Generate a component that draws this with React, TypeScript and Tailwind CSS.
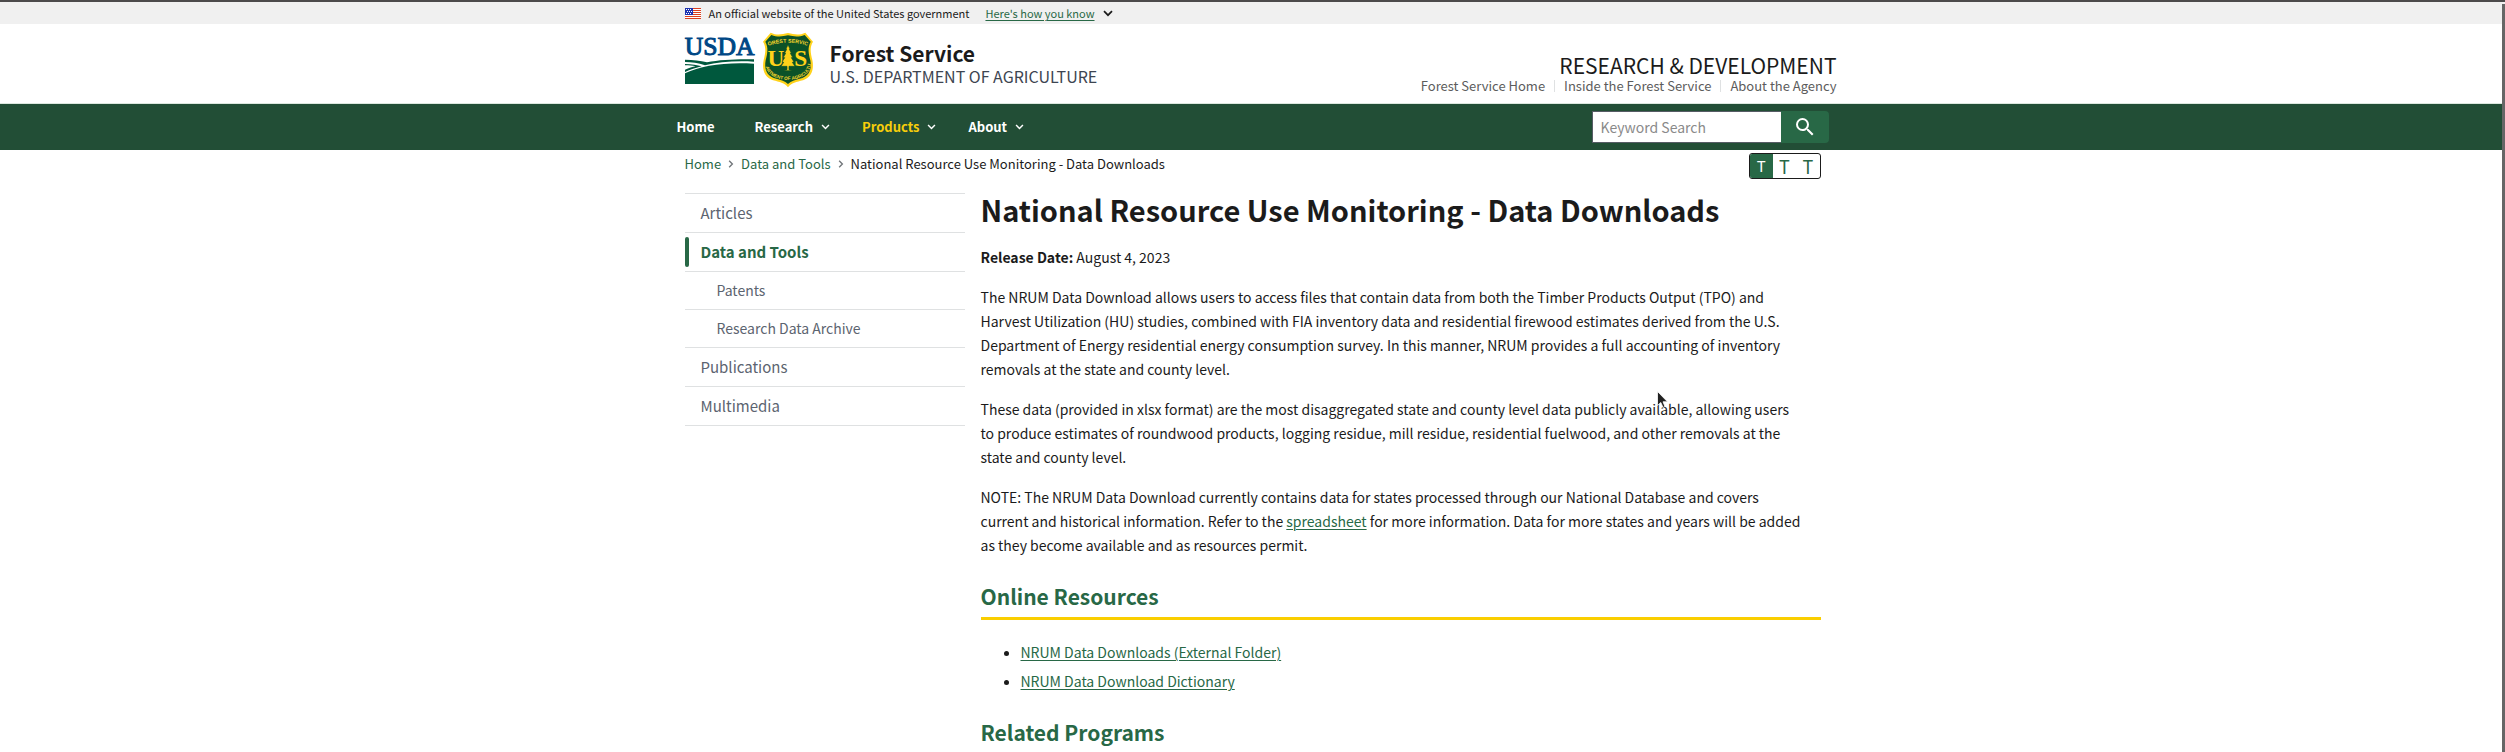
import React from "react";

const link = "text-[#286846] underline decoration-1 underline-offset-2";

function Chevron({ className }: { className: string }) {
  return (
    <svg viewBox="0 0 10 7" className={className} fill="none" stroke="currentColor" strokeWidth="1.7" aria-hidden="true">
      <path d="M1 1.2 L5 5.2 L9 1.2" />
    </svg>
  );
}

function Flag() {
  return (
    <svg viewBox="0 0 16 11" className="h-[11px] w-4" role="img" aria-label="U.S. flag" shapeRendering="crispEdges">
      <rect width="16" height="11" fill="#fff" />
      {[0, 2, 4, 6, 8, 10].map((y) => (
        <rect key={y} y={y} width="16" height="1" fill="#db3e1f" />
      ))}
      <rect width="8" height="7" fill="#1e33b1" />
      {[1, 3, 5].map((y) =>
        [1, 3, 5].map((x) => <rect key={`${x}-${y}`} x={x + (y === 3 ? 1 : 0)} y={y} width="1" height="1" fill="#fff" />)
      )}
    </svg>
  );
}

function UsdaLogo() {
  return (
    <svg viewBox="0 0 207 147" className="h-[49px] w-[69px] overflow-visible" role="img" aria-label="USDA">
      <text x="-1" y="57" fontFamily="Liberation Serif, serif" fontSize="77" fill="#004785" stroke="#004785" strokeWidth="3">
        USDA
      </text>
      <path d="M0 71 C25 71 45 74 66 79 C105 71 155 69 207 70 V77 C150 74 100 78 60 88 C40 81 20 78 0 78 Z" fill="#00583d" />
      <path d="M0 84 C20 84 38 87 50 91 C33 96 15 101 0 108 V101 C12 96 22 93 32 91 C22 89 12 88 0 88 Z" fill="#00583d" />
      <path d="M0 144 V112 C50 88 120 78 207 83 V144 Z" fill="#00583d" />
    </svg>
  );
}

function ShieldLogo() {
  return (
    <svg viewBox="0 0 156 168" className="h-14 w-[52px] overflow-visible" role="img" aria-label="Forest Service shield">
      <path
        d="M26 2 C43 10 58 8 78 3 C98 8 113 10 130 2 L153 29 C142 47 146 63 151 84 C157 113 148 137 123 145 C104 150 88 153 78 166 C68 153 52 150 33 145 C8 137 -1 113 5 84 C10 63 14 47 3 29 Z"
        fill="#ffd21a"
      />
      <path
        d="M28 9 C46 16 61 14 78 10 C95 14 110 16 128 9 L146 29 C136 47 140 65 145 85 C150 110 142 131 121 138 C102 143 87 147 78 156 C69 147 54 143 35 138 C14 131 6 110 11 85 C16 65 20 47 10 29 Z"
        fill="#0b5228"
      />
      <defs>
        <path id="shield-top" d="M18 42 Q78 22 138 42" />
        <path id="shield-bottom" d="M10 100 C16 158 140 158 146 100" />
      </defs>
      <g fontFamily="Liberation Sans Narrow, Liberation Sans, sans-serif" fontWeight="700" fill="#f5d32a" textAnchor="middle">
        <text fontSize="16">
          <textPath href="#shield-top" startOffset="50%">FOREST SERVICE</textPath>
        </text>
        <text fontSize="14">
          <textPath href="#shield-bottom" startOffset="50%">DEPARTMENT OF AGRICULTURE</textPath>
        </text>
      </g>
      <g fontFamily="Liberation Serif, serif" fontWeight="700" fontSize="70" fill="#ffd21a" textAnchor="middle">
        <text x="42" y="102">U</text>
        <text x="116" y="102">S</text>
      </g>
      <path
        d="M78 38 L84 51 L82 52 L88 63 L85 64 L92 76 L88 77 L96 90 L91 91 L99 103 L81 103 V113 L92 116 H64 L75 113 V103 L57 103 L65 91 L60 90 L68 77 L64 76 L71 64 L68 63 L74 52 L72 51 Z"
        fill="#ffd21a"
        stroke="#0b5228"
        strokeWidth="2"
      />
    </svg>
  );
}

const menu = [
  { label: "Home" },
  { label: "Research", more: true },
  { label: "Products", more: true, current: true },
  { label: "About", more: true },
];

const side = [
  { label: "Articles" },
  { label: "Data and Tools", current: true },
  { label: "Patents", sub: true },
  { label: "Research Data Archive", sub: true },
  { label: "Publications" },
  { label: "Multimedia" },
];

const container = "mx-auto w-full max-w-[1200px] px-8";
const sectionTitle = "mt-[22px] border-b-3 border-[#face00] pb-1 text-[21px] leading-[34px] font-bold text-[#286846]";
const agencyLink = "flex items-center before:mx-[9px] before:h-3 before:w-px before:bg-[#dfe1e2]";

export default function App() {
  return (
    <div className="relative flex h-screen flex-col overflow-hidden bg-white font-['Noto_Sans_CJK_SC','Noto_Sans',sans-serif] text-[14px] leading-6 text-[#1b1b1b]">
      <div className="border-t-2 border-[#4c4a4b] bg-[#f0f0f0]">
        <div className={`${container} flex h-[22px] items-center text-[11px] leading-[22px]`}>
          <Flag />
          <span className="ml-2">An official website of the United States government</span>
          <button className={`${link} ml-4`}>Here&apos;s how you know</button>
          <Chevron className="ml-2 h-[7px] w-2.5" />
        </div>
      </div>

      <header>
        <div className="border-b border-[#dce8df]">
          <div className={`${container} flex h-[79px] items-start`}>
            <a href="#usda" className="pt-3">
              <UsdaLogo />
            </a>
            <a href="#fs" className="ml-2 pt-2">
              <ShieldLogo />
            </a>
            <div className="ml-4 pt-[17px]">
              <div className="text-[21px] leading-6 font-bold">Forest Service</div>
              <div className="text-[16px] leading-[22px] text-[#3d4551]">U.S. DEPARTMENT OF AGRICULTURE</div>
            </div>
            <div className="-mr-4 ml-auto flex flex-col items-end pt-[29px]">
              <div className="text-[21px] leading-6">RESEARCH &amp; DEVELOPMENT</div>
              <div className="flex items-center text-[13px] leading-[18px] text-[#5c5c5c]">
                <a href="#home">Forest Service Home</a>
                <a href="#inside" className={agencyLink}>
                  Inside the Forest Service
                </a>
                <a href="#about" className={agencyLink}>
                  About the Agency
                </a>
              </div>
            </div>
          </div>
        </div>
        <nav className="bg-[#224e36]">
          <div className={`${container} flex h-[46px] items-center`}>
            <ul className="-ml-2 flex items-center gap-8 text-[13px] font-bold">
              {menu.map((m) => (
                <li key={m.label}>
                  <button className={`flex items-center gap-2 ${m.current ? "text-[#f7cd0a]" : "text-white"} ${m.more ? "" : "pr-2"}`}>
                    {m.label}
                    {m.more && <Chevron className="h-[6px] w-[9px] text-white" />}
                  </button>
                </li>
              ))}
            </ul>
            <form className="-mr-2 ml-auto flex" role="search">
              <input
                type="search"
                aria-label="Keyword Search"
                placeholder="Keyword Search"
                className="h-8 w-[189px] border border-r-0 border-[#565c65] bg-white px-2 text-[14px] placeholder:text-[#8a8a8a]"
              />
              <button aria-label="Search" className="flex h-8 w-12 items-center justify-center rounded-r bg-[#286846] text-white">
                <svg viewBox="0 0 24 24" className="h-6 w-6" fill="currentColor" aria-hidden="true">
                  <path d="M15.5 14h-.79l-.28-.27A6.471 6.471 0 0 0 16 9.5 6.5 6.5 0 1 0 9.5 16c1.61 0 3.09-.59 4.23-1.57l.27.28v.79l5 4.99L20.49 19l-4.99-5zm-6 0C7.01 14 5 11.99 5 9.5S7.01 5 9.5 5 14 7.01 14 9.5 11.99 14 9.5 14z" />
                </svg>
              </button>
            </form>
          </div>
        </nav>
      </header>

      <div className={`${container} flex items-start justify-between`}>
        <nav aria-label="Breadcrumb" className="pt-0.5">
          <ol className="flex items-center text-[13px] leading-6">
            <li>
              <a href="#home" className="text-[#286846]">Home</a>
            </li>
            <li className="flex items-center">
              <Chevron className="mx-1.5 h-[6px] w-2 -rotate-90 text-[#71767a]" />
              <a href="#data" className="text-[#286846]">Data and Tools</a>
            </li>
            <li className="flex items-center">
              <Chevron className="mx-1.5 h-[6px] w-2 -rotate-90 text-[#71767a]" />
              National Resource Use Monitoring - Data Downloads
            </li>
          </ol>
        </nav>
        <div className="mt-[3px] flex h-[26px] w-[72px] overflow-hidden rounded-[3px] border border-[#1b1b1b] leading-6">
          <button aria-label="Small text" className="flex-1 bg-[#286846] text-[15px] text-white">T</button>
          <button aria-label="Medium text" className="flex-1 text-[18px] text-[#286846]">T</button>
          <button aria-label="Large text" className="flex-1 text-[18px] text-[#286846]">T</button>
        </div>
      </div>

      <div className={`${container} flex items-start gap-4 pt-3.5`}>
        <nav aria-label="Section" className="w-[280px] shrink-0">
          <ul className="divide-y divide-[#dfe1e2] border-y border-[#dfe1e2] text-[#5c6470]">
            {side.map((s) => (
              <li key={s.label} className="relative">
                <a
                  href="#section"
                  className={
                    s.sub
                      ? "block py-[7px] pl-8 text-[14px] leading-[23px]"
                      : s.current
                        ? "block py-[7px] pl-4 text-[15px] leading-6 font-bold text-[#286846]"
                        : "block py-[7px] pl-4 text-[15px] leading-6"
                  }
                >
                  {s.label}
                </a>
                {s.current && <span className="absolute inset-y-1 left-0 w-1 rounded-full bg-[#286846]" />}
              </li>
            ))}
          </ul>
        </nav>

        <main className="min-w-0 flex-1">
          <h1 className="text-[29px] leading-8 font-bold">National Resource Use Monitoring - Data Downloads</h1>
          <p className="mt-5">
            <strong>Release Date:</strong> August 4, 2023
          </p>
          <p className="mt-4 pr-4">
            The NRUM Data Download allows users to access files that contain data from both the Timber Products Output (TPO) and
            Harvest Utilization (HU) studies, combined with FIA inventory data and residential firewood estimates derived from the
            U.S. Department of Energy residential energy consumption survey. In this manner, NRUM provides a full accounting of
            inventory removals at the state and county level.
          </p>
          <p className="mt-4 pr-4">
            These data (provided in xlsx format) are the most disaggregated state and county level data publicly available, allowing
            users to produce estimates of roundwood products, logging residue, mill residue, residential fuelwood, and other removals
            at the state and county level.
          </p>
          <p className="mt-4 pr-4">
            NOTE: The NRUM Data Download currently contains data for states processed through our National Database and covers current
            and historical information. Refer to the <a href="#sheet" className={link}>spreadsheet</a> for more information. Data for
            more states and years will be added as they become available and as resources permit.
          </p>
          <h2 className={sectionTitle}>Online Resources</h2>
          <ul className="mt-5 list-disc space-y-[5px] pl-10">
            <li>
              <a href="#downloads" className={link}>NRUM Data Downloads (External Folder)</a>
            </li>
            <li>
              <a href="#dictionary" className={link}>NRUM Data Download Dictionary</a>
            </li>
          </ul>
          <h2 className={sectionTitle}>Related Programs</h2>
        </main>
      </div>

      <div className="absolute top-1 right-0 bottom-0 w-[3px] bg-[#666]" />
      <svg viewBox="0 0 11 18" className="absolute top-[391px] left-[1657px] h-[18px] w-[11px]" aria-hidden="true">
        <path d="M0.5 0.5 V14.5 L3.8 11.5 L6 16.5 L8 15.6 L6 10.8 H10.5 Z" fill="#222" stroke="#fff" strokeWidth="0.8" />
      </svg>
    </div>
  );
}
